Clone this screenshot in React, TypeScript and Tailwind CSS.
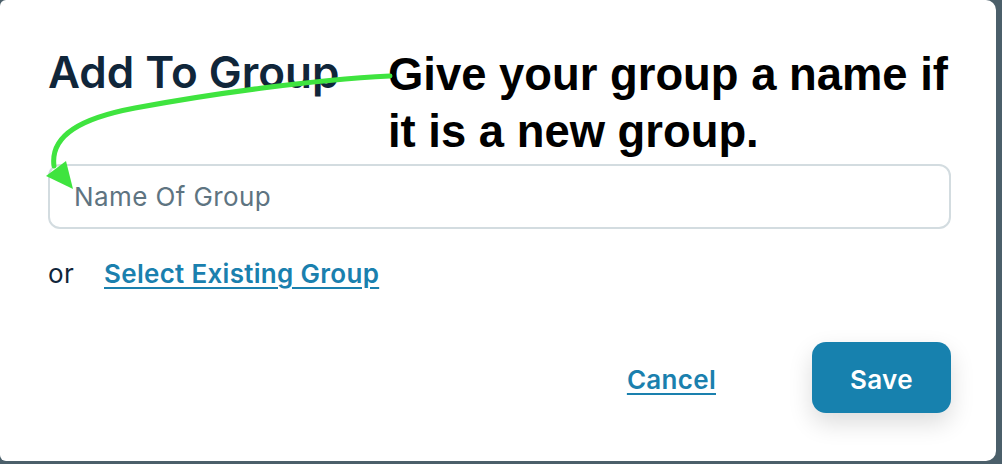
import { useState } from "react";

const AddToGroup = () => {
  const [name, setName] = useState("");

  return (
    <div className="w-full h-screen bg-[#4b5f6a] overflow-hidden">
      <div className="relative w-[996px] h-[461px] bg-white rounded-[10px] rounded-tl-[6px] rounded-bl-[6px] pl-[48px] pr-[45px] font-['Inter',sans-serif]">
        {/* HEADER + CALLOUT */}
        <div className="flex items-start pt-[46px]">
          <h1 className="w-[340px] text-[44px] leading-[57px] font-semibold text-[#10263a] -mt-[2px]">
            Add To Group
          </h1>
          <p className="font-['Liberation_Sans',Arial,sans-serif] font-bold text-[45.4px] leading-[57px] text-black">
            Give your group a name if
            <br />
            it is a new group.
          </p>
        </div>

        {/* INPUT */}
        <input
          value={name}
          onChange={(e) => setName(e.target.value)}
          placeholder="Name Of Group"
          className="mt-[4px] w-full h-[65px] border-2 border-[#d3dce0] rounded-[12px] px-[24px] text-[26px] tracking-[0.4px] text-[#10263a] placeholder:text-[#5e7481] outline-none"
        />

        {/* EXISTING */}
        <div className="mt-[28px] flex items-center text-[26px] leading-[34px] tracking-[0.3px]">
          <span className="w-[56px] text-[#10263a]">or</span>
          <a href="#" className="font-semibold text-[#1a80ae] underline underline-offset-[4px]">
            Select Existing Group
          </a>
        </div>

        {/* ACTIONS */}
        <div className="mt-[51px] flex items-center justify-end gap-[96px]">
          <a href="#" className="text-[26px] tracking-[0.3px] font-semibold text-[#1a80ae] underline underline-offset-[4px] mt-[3px]">
            Cancel
          </a>
          <button className="w-[139px] h-[71px] pt-[4px] rounded-[14px] bg-[#1781ae] text-white text-[26px] tracking-[0.3px] font-semibold shadow-[0_10px_24px_rgba(0,0,0,0.14)]">
            Save
          </button>
        </div>

        {/* ARROW ANNOTATION */}
        <svg
          className="absolute left-0 top-0 pointer-events-none"
          width="400"
          height="200"
          viewBox="0 0 400 200"
        >
          <path
            d="M 390 76 C 310 80, 210 94, 135 108 C 82 118, 50 135, 54 166"
            fill="none"
            stroke="#3fe43f"
            strokeWidth="5"
            strokeLinecap="round"
          />
          <polygon points="46,176 66,161 73,189" fill="#3fe43f" />
        </svg>
      </div>
    </div>
  );
};

export default function App() {
  return <AddToGroup />;
}
